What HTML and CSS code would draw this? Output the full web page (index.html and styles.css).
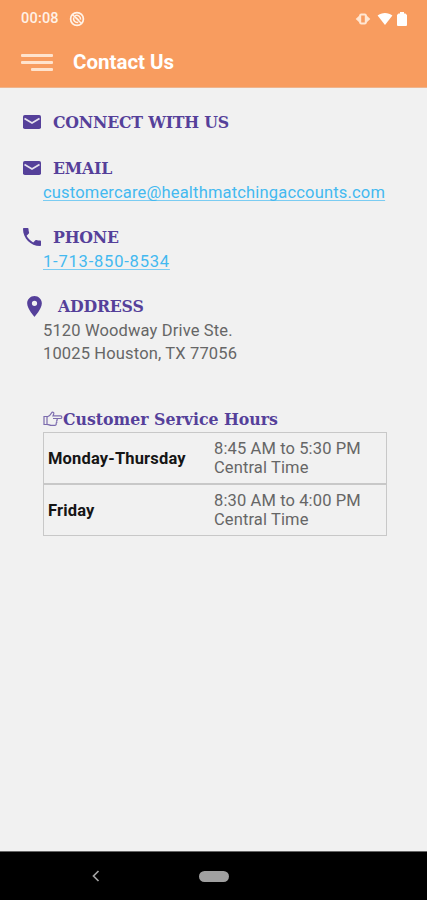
FILE: index.html
```html
<!DOCTYPE html>
<html lang="en">
<head>
    <meta charset="UTF-8">
    <meta name="viewport" content="width=device-width, initial-scale=1.0">
    <title>Contact Us</title>
    <link rel="stylesheet" href="styles.css">
</head>

<body>
    <header class="top">
        <div class="status-bar">
            <span class="clock">00:08</span>
            <svg viewBox="0 0 16 16" width="16" height="16">
                <circle cx="8" cy="8" r="6.4" fill="none" stroke="#fff3e8" stroke-width="1.7"/>
                <path d="M3.5 3.5l9 9M6 4.7c3-1.2 6 1 5.5 4M4.7 6.5c-.8 3 1.5 5.5 4.5 4.8M7 6.5l3 3" fill="none" stroke="#fff3e8" stroke-width="1.5"/>
            </svg>
            <div class="status-icons">
                <svg viewBox="0 0 16 14" width="16" height="14">
                    <path d="M.7 7l4.3-4v8zM15.3 7L11 3v8z" fill="#ffe6d2"/>
                    <rect x="5.2" y="2.4" width="5.6" height="9.2" rx="1" fill="none" stroke="#ffe6d2" stroke-width="2"/>
                </svg>
                <svg class="wifi" viewBox="0 0 16 14" width="16" height="14">
                    <path d="M.6 3.5C4.6 0 11.4 0 15.4 3.5L8 13z" fill="#fff"/>
                </svg>
                <svg class="battery" viewBox="0 0 10 14" width="10" height="14">
                    <path d="M3 0h4v1.5h1.5L10 3v10a1 1 0 0 1-1 1H1a1 1 0 0 1-1-1V3l1.5-1.5H3z" fill="#fff"/>
                </svg>
            </div>
        </div>
        <div class="nav">
            <div class="menu">
                <span></span>
                <span></span>
                <span class="short"></span>
            </div>
            <h1>Contact Us</h1>
        </div>
    </header>

    <main class="content">
        <section class="connect">
            <div class="title">
                <svg class="icon" viewBox="0 0 18 14" width="18" height="14">
                    <rect width="18" height="14" rx="1.8" fill="#55409a"/>
                    <path d="M1.5 3.5L9 8l7.500-4.500" fill="none" stroke="#e6e2ee" stroke-width="1.7"/>
                </svg>
                <h2>CONNECT WITH US</h2>
            </div>
        </section>

        <section class="email">
            <div class="title">
                <svg class="icon" viewBox="0 0 18 14" width="18" height="14">
                    <rect width="18" height="14" rx="1.8" fill="#55409a"/>
                    <path d="M1.5 3.5L9 8l7.500-4.500" fill="none" stroke="#e6e2ee" stroke-width="1.7"/>
                </svg>
                <h2>EMAIL</h2>
            </div>
            <a class="link" href="mailto:customercare@healthmatchingaccounts.com">customercare@healthmatchingaccounts.com</a>
        </section>

        <section class="phone">
            <div class="title">
                <svg class="icon" viewBox="3 3 18 18" width="18" height="18">
                    <path d="M6.62 10.79c1.44 2.83 3.76 5.14 6.59 6.59l2.2-2.2c.27-.27.67-.36 1.02-.24 1.12.37 2.33.57 3.57.57.55 0 1 .45 1 1V20c0 .55-.45 1-1 1-9.39 0-17-7.61-17-17 0-.55.45-1 1-1h3.5c.55 0 1 .45 1 1 0 1.25.2 2.45.57 3.57.11.35.03.74-.25 1.02z" fill="#55409a"/>
                </svg>
                <h2>PHONE</h2>
            </div>
            <a class="link phone-link" href="tel:17138508534">1-713-850-8534</a>
        </section>

        <section class="address">
            <div class="title">
                <svg class="icon pin" viewBox="5 2 14 20" width="15" height="21">
                    <path d="M12 2C8.13 2 5 5.13 5 9c0 5.25 7 13 7 13s7-7.75 7-13c0-3.87-3.13-7-7-7zm0 9.500a2.500 2.500 0 0 1 0-5 2.500 2.500 0 0 1 0 5z" fill="#55409a"/>
                </svg>
                <h2>ADDRESS</h2>
            </div>
            <p class="lines">5120 Woodway Drive Ste.<br>10025 Houston, TX 77056</p>
        </section>

        <section class="hours">
            <div class="hours-title">
                <svg viewBox="0 0 20 16" width="20" height="16">
                    <path d="M1 5.500h3v8H1zM4 6c2.500-.5 3.500-2 4.500-4 .8-1.500 2.700-.8 2.300.8L10 4.800h7.500c1.800 0 1.800 2.700 0 2.700H13c1.800.2 1.700 2.500 0 2.500 1.300.2 1.200 2.200-.3 2.200 1 .3.700 2.100-.7 2.100H8c-1.500 0-2-1-4-1M10 7.500h3" fill="none" stroke="#7c6cae" stroke-width="1.2"/>
                </svg>
                <h2>Customer Service Hours</h2>
            </div>
            <div class="row">
                <b>Monday-Thursday</b>
                <span>8:45 AM to 5:30 PM<br>Central Time</span>
            </div>
            <div class="row">
                <b>Friday</b>
                <span>8:30 AM to 4:00 PM<br>Central Time</span>
            </div>
        </section>
    </main>

    <footer class="bottom">
        <svg viewBox="0 0 8 12" width="8" height="12">
            <path d="M6.5 1L1.5 6l5 5" fill="none" stroke="#a3a3a3" stroke-width="1.7"/>
        </svg>
        <div class="home"></div>
    </footer>
</body>
</html>
```
FILE: styles.css
```css
* {
    box-sizing: border-box;
}

body {
    margin: 0;
    height: 900px;
    display: flex;
    flex-direction: column;
    background: #f1f1f1;
    font-family: Roboto, sans-serif;
    color: #666;
    overflow: hidden;
}

h1, h2, p {
    margin: 0;
}

svg {
    display: block;
    flex: none;
}

.top {
    height: 88px;
    background: #f89c5f;
    border-bottom: 1px solid #eeb48d;
    color: #fff;
}

.status-bar {
    display: flex;
    align-items: center;
    height: 37px;
    padding: 0 20px 0 21px;
}

.clock {
    width: 48px;
    font-size: 14.5px;
    font-weight: 500;
    letter-spacing: 0.2px;
    color: #fff1e6;
}

.status-icons {
    display: flex;
    align-items: center;
    margin-left: auto;
}

.wifi {
    margin-left: 6px;
}

.battery {
    margin-left: 4px;
}

.nav {
    display: flex;
    align-items: center;
    height: 50px;
    padding-left: 21px;
}

.menu {
    display: flex;
    flex-direction: column;
    align-items: flex-end;
    gap: 4px;
    width: 32px;
    margin-right: 20px;
}

.menu span {
    width: 32px;
    height: 3px;
    border-radius: 1px;
    background: #ffe3cd;
}

.menu .short {
    width: 22px;
}

h1 {
    font-size: 20.5px;
    font-weight: 700;
}

.content {
    flex: 1;
    padding: 22px 0 0 23px;
}

.title {
    display: flex;
    align-items: center;
    height: 24px;
}

.icon {
    margin-right: 12px;
}

.pin {
    margin: 0 16px 0 4px;
}

h2 {
    font-family: "Roboto Slab", "DejaVu Serif Condensed", "DejaVu Serif", serif;
    font-size: 17.5px;
    font-weight: 700;
    font-stretch: condensed;
    line-height: 24px;
    letter-spacing: -0.2px;
    white-space: nowrap;
    color: #55409a;
}

.connect {
    height: 46px;
}

.email, .phone {
    height: 69px;
}

.link {
    display: block;
    width: fit-content;
    margin-left: 20px;
    font-size: 16.5px;
    line-height: 25px;
    letter-spacing: 0.18px;
    color: #43b9f0;
    text-decoration-color: #7accf2;
    text-decoration-thickness: 1px;
    text-decoration-skip-ink: none;
    text-underline-offset: 2px;
}

.phone-link {
    letter-spacing: 0.8px;
}

.address {
    height: 113px;
}

.lines {
    margin: 1px 0 0 20px;
    font-size: 16.5px;
    line-height: 23px;
    letter-spacing: 0.15px;
}

.hours {
    width: 364px;
    padding: 0 0 0 20px;
}

.hours-title {
    display: flex;
    align-items: center;
    height: 25px;
    padding-bottom: 1px;
}

.hours-title h2 {
    letter-spacing: 0;
}

.row {
    display: flex;
    align-items: center;
    height: 52px;
    padding-left: 4px;
    border: 1px solid #c8c8c8;
}

.row b {
    width: 166px;
    font-size: 16.5px;
    letter-spacing: 0.16px;
    color: #151515;
}

.row span {
    font-size: 16.5px;
    line-height: 19px;
    letter-spacing: 0.12px;
}

.bottom {
    display: flex;
    align-items: center;
    height: 49px;
    padding-left: 92px;
    border-top: 1px solid #666;
    background: #000;
}

.home {
    width: 30px;
    height: 11px;
    margin-left: 99px;
    border-radius: 6px;
    background: #a0a0a0;
}
```
